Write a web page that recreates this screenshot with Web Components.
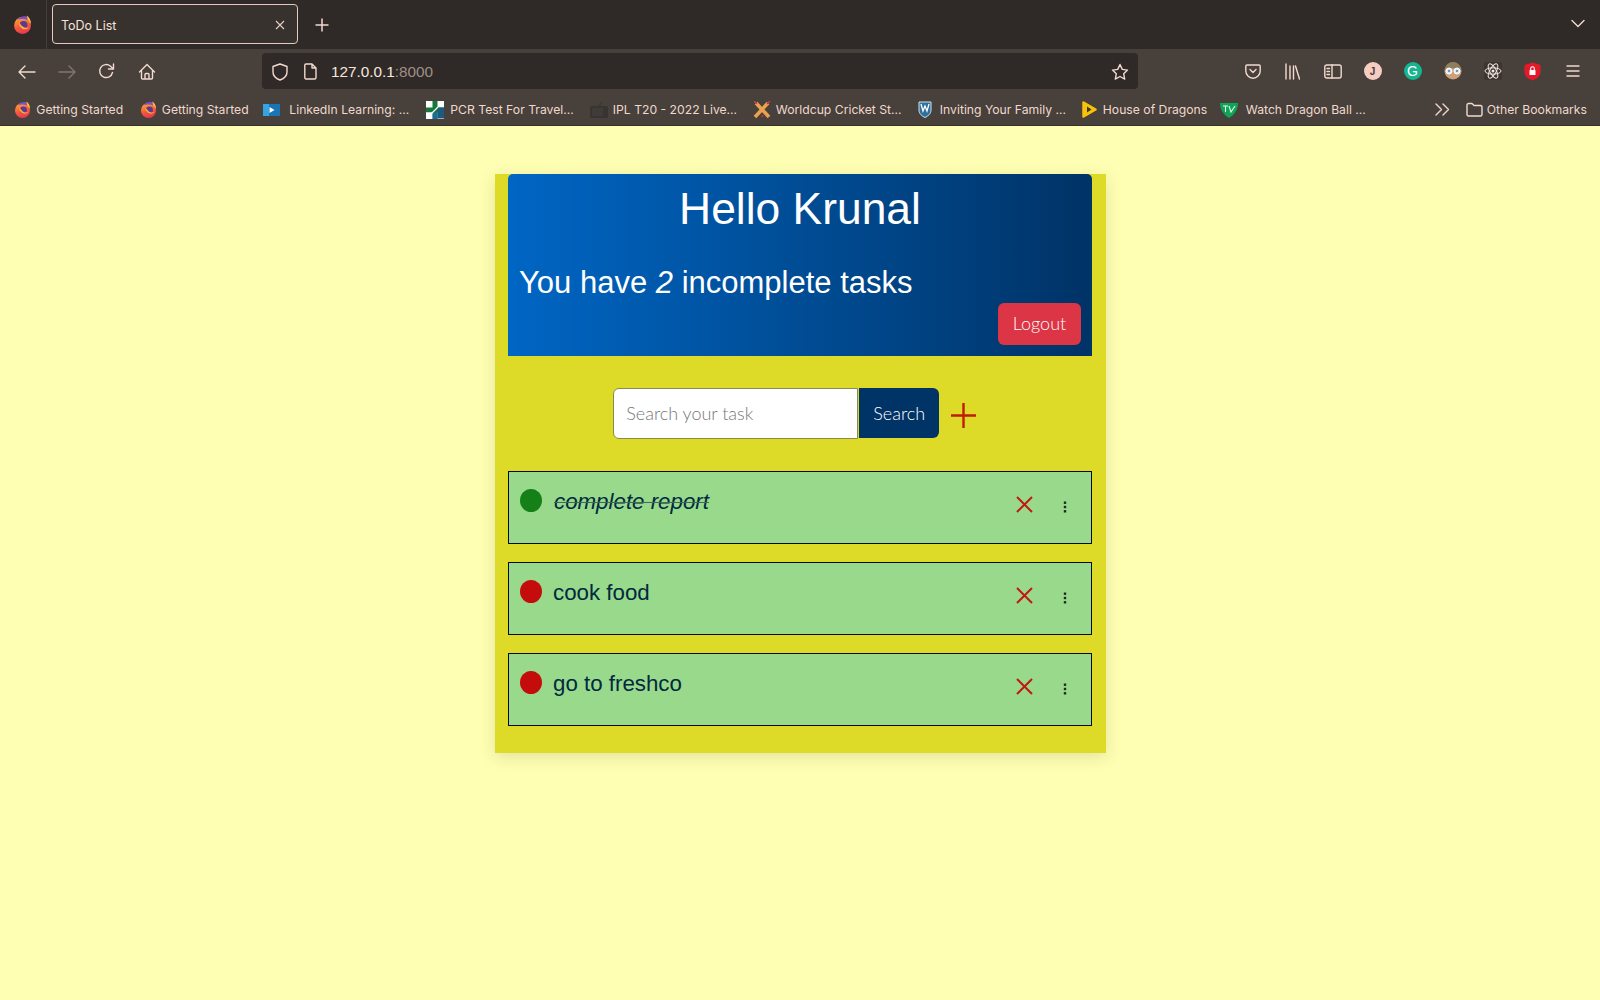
<!DOCTYPE html>
<html>
<head>
<meta charset="utf-8">
<title>ToDo List</title>
<style>
  html, body { margin: 0; height: 100%; }
  body { display: flex; flex-direction: column; height: 1000px; overflow: hidden; background: #ffffb3; font-family: "Liberation Sans", sans-serif; }
</style>
</head>
<body>
<browser-chrome></browser-chrome>
<todo-page>
  <todo-card>
    <todo-header name="Krunal" count="2"></todo-header>
    <todo-search></todo-search>
    <todo-item text="complete report" done></todo-item>
    <todo-item text="cook food"></todo-item>
    <todo-item text="go to freshco"></todo-item>
  </todo-card>
</todo-page>
<script>
const STROKE = 'fill="none" stroke="#f3d9cf" stroke-width="1.4" stroke-linecap="round" stroke-linejoin="round"';

// small firefox logo, used in the tab strip and the bookmarks
const foxIcon = (id, size) => `<svg width="${size}" height="${size}" viewBox="0 0 18 18">
  <defs><linearGradient id="${id}" x1="0" y1="0" x2=".3" y2="1"><stop offset="0" stop-color="#ffb02e"/><stop offset=".65" stop-color="#f7573a"/><stop offset="1" stop-color="#ea3a55"/></linearGradient></defs>
  <circle cx="9" cy="10" r="8" fill="url(#${id})"/>
  <path d="M4 4.500C6 1.500 10 .5 13 1.500c2.500 1 4 4 4 7-1-2.500-3-4-5.500-4.500C9 3.500 6 3.500 4 4.500z" fill="#7b4fd0"/>
  <path d="M13 .5c2.500 1.500 4 4.500 4 8l-3-4z" fill="#ffc02e"/>
  <circle cx="10" cy="9.500" r="3.700" fill="#5b3a90"/>
  <path d="M5.500 7c0 4 2.500 6.500 6 6.500 1.500 0 3-.8 3.800-2-2 1-4.500.8-6-.5S6.500 8 5.500 7z" fill="#ffb02e"/>
</svg>`;

const BOOKMARK_ICONS = {
  fox1: foxIcon("fg1", 17),
  fox2: foxIcon("fg2", 17),
  linkedin: `<svg width="17" height="12" viewBox="0 0 17 12"><rect width="17" height="12" fill="#1a75b5"/><rect width="6" height="12" fill="#35a4e2"/><path d="M6.500 3l5 3-5 3z" fill="#fff"/></svg>`,
  pcr: `<svg width="18" height="18" viewBox="0 0 18 18"><rect width="18" height="18" fill="#fff"/><path d="M6.500 0h5v6.500H18v5h-6.500V18h-5v-6.500H0v-5h6.500z" fill="#14773c"/><path d="M0 11.500h6.500V18H0z" fill="#fff"/><path d="M11.500 6.500H18v11h-6.500z" fill="#1d5a80"/><path d="M6.500 11.500h5V18h-5z" fill="#1b6d96"/><path d="M5 13l7-7" stroke="#fff" stroke-width="1.200"/></svg>`,
  tv: `<svg width="18" height="18" viewBox="0 0 18 18"><path d="M9 5l3-4" stroke="#3a3733" stroke-width="1.200"/><rect y="5" width="18" height="12" rx="1.500" fill="#373431"/><rect x="2" y="7" width="11" height="8" fill="#3f3c38"/></svg>`,
  bats: `<svg width="18" height="18" viewBox="0 0 18 18"><path d="M3 2l13 14M15 2L2 16" stroke="#eba24e" stroke-width="3.600"/><path d="M1 0l3 3M17 0l-3 3" stroke="#c9394a" stroke-width="1.600"/><circle cx="9.500" cy="15" r="1" fill="#d5384a"/></svg>`,
  crest: `<svg width="14" height="17" viewBox="0 0 14 17"><path d="M1 1h12v8c0 4-3 6-6 7.500C4 15 1 13 1 9z" fill="#2f6f9c" stroke="#cfe5f2" stroke-width="1"/><path d="M3 3l2 7 2-5 2 5 2-7" fill="none" stroke="#fff" stroke-width="1.300"/></svg>`,
  play: `<svg width="15" height="17" viewBox="0 0 15 17"><path d="M1.500 1.500L13.500 8.500 1.500 15.500z" fill="#f7c20a" stroke="#f7c20a" stroke-width="2.500" stroke-linejoin="round"/><path d="M5 5.500l4.500 3L5 11.500z" fill="#3b3733"/></svg>`,
  tvg: `<svg width="18" height="16" viewBox="0 0 18 16"><path d="M0 1h18c0 7-4 12-9 15C4 13 0 8 0 1z" fill="#0fa458"/><path d="M3 4h5M5.500 4v6M9 4l2 6 4-6" fill="none" stroke="#e7f7ee" stroke-width="1.100"/></svg>`
};

class BookmarkLink extends HTMLElement {
  connectedCallback() {
    const icon = BOOKMARK_ICONS[this.getAttribute("icon")] || "";
    this.attachShadow({ mode: "open" }).innerHTML = `
      <style>
        :host { display: flex; align-items: center; gap: var(--bm-gap, 5px); white-space: nowrap; flex: none; }
        span { font: 12.200px Inter, "Liberation Sans", sans-serif; color: #f0d8ce; }
        .i { display: flex; }
      </style>
      <div class="i">${icon}</div><span><slot></slot></span>`;
  }
}
customElements.define("bookmark-link", BookmarkLink);

class BrowserChrome extends HTMLElement {
  constructor() {
    super();
    this.attachShadow({ mode: "open" }).innerHTML = `
      <style>
        :host { display: block; flex: none; font-family: "Liberation Sans", sans-serif; color: #f3d9cf; }
        svg { display: block; }
        .tabs { height: 49px; background: #2f2a27; display: flex; align-items: flex-start; }
        .fox { width: 47px; height: 49px; padding-right: 2px; border-right: 1px solid #46403c; box-sizing: border-box; display: flex; align-items: center; justify-content: center; }
        .tab { margin: 4px 0 0 5px; width: 246px; height: 40px; box-sizing: border-box; border: 1px solid #e8c9bb; border-radius: 4px; background: #38322f; display: flex; align-items: center; justify-content: space-between; padding: 2px 12px 0 8px; font: 12.500px Inter, "Liberation Sans", sans-serif; color: #f5e3da; }
        .new { margin: 18px 0 0 17px; }
        .all { margin: 19px 15px 0 auto; }
        .toolbar { height: 49px; padding-top: 4px; box-sizing: border-box; background: #47403b; display: flex; align-items: flex-start; }
        .nav { display: flex; align-items: center; height: 36px; width: 262px; padding: 1px 0 0 6.500px; box-sizing: border-box; }
        .cell { width: 40px; display: flex; justify-content: center; align-items: center; flex: none; }
        .url { width: 876px; height: 36px; background: #2f2a27; border-radius: 4px; display: flex; align-items: center; padding: 1px 9px 0 10px; box-sizing: border-box; font-size: 15.300px; }
        .url b { font-weight: 400; color: #f7e6de; margin-left: 14px; }
        .url b i { font-style: normal; color: #a08f87; }
        .url .doc { margin-left: 16px; }
        .url .star { margin-left: auto; }
        .right { flex: 1; display: flex; align-items: center; height: 36px; justify-content: flex-end; padding: 0 7.500px 0 0; }
        .avatar { width: 18px; height: 18px; border-radius: 50%; display: flex; align-items: center; justify-content: center; font-size: 10px; font-weight: 700; }
        .bookmarks { height: 28px; box-sizing: border-box; border-bottom: 1px solid #34302c; background: #47403b; display: flex; align-items: flex-start; padding-left: 14.300px; }
        .bookmarks bookmark-link { height: 23px; }
        .list { display: flex; }
        .end { margin-left: auto; display: flex; align-items: center; height: 23px; padding-right: 13px; gap: 16px; font: 12.200px Inter, "Liberation Sans", sans-serif; color: #f0d8ce; }
        .end div { display: flex; align-items: center; gap: 4px; }
      </style>
      <div class="tabs">
        <div class="fox">${foxIcon("fg0", 19)}</div>
        <div class="tab"><span>ToDo List</span>
          <svg width="10" height="10" viewBox="0 0 10 10"><path d="M1 1l8 8M9 1L1 9" stroke="#e6cfc5" stroke-width="1.100"/></svg>
        </div>
        <svg class="new" width="14" height="14" viewBox="0 0 14 14"><path d="M7 .5v13M.5 7h13" stroke="#f3d9cf" stroke-width="1.500"/></svg>
        <svg class="all" width="14" height="9" viewBox="0 0 14 9"><path d="M1 1.500l6 6 6-6" ${STROKE}/></svg>
      </div>
      <div class="toolbar">
        <div class="nav">
          <div class="cell"><svg width="18" height="14" viewBox="0 0 18 14"><path d="M1 7h16M7 1L1 7l6 6" ${STROKE}/></svg></div>
          <div class="cell"><svg width="18" height="14" viewBox="0 0 18 14"><path d="M1 7h16M11 1l6 6-6 6" fill="none" stroke="#84756e" stroke-width="1.400" stroke-linecap="round" stroke-linejoin="round"/></svg></div>
          <div class="cell"><svg width="17" height="17" viewBox="0 0 17 17"><path d="M14.500 9.500A6.500 6.500 0 1 1 12.500 3.200L15 5.500" ${STROKE}/><path d="M15.500 1v5h-5" ${STROKE}/></svg></div>
          <div class="cell"><svg width="18" height="18" viewBox="0 0 18 18"><path d="M1.500 9L9 1.500 16.500 9M3.500 7.500V15a1 1 0 0 0 1 1h9a1 1 0 0 0 1-1V7.500M7 16v-4.500a1 1 0 0 1 1-1h2a1 1 0 0 1 1 1V16" ${STROKE}/></svg></div>
        </div>
        <div class="url">
          <svg width="16" height="18" viewBox="0 0 16 18"><path d="M8 1l7 2.500V9c0 4-3.500 6.800-7 8-3.500-1.200-7-4-7-8V3.500z" ${STROKE}/></svg>
          <svg class="doc" width="13" height="17" viewBox="0 0 13 17"><path d="M2 1h6l4 4v9.500a1.500 1.500 0 0 1-1.500 1.500h-8.500A1.500 1.500 0 0 1 .8 14.500V2.200A1.200 1.200 0 0 1 2 1zM8 1v4h4" ${STROKE}/></svg>
          <b>127.0.0.1<i>:8000</i></b>
          <svg class="star" width="18" height="18" viewBox="0 0 18 18"><path d="M9 1.500l2.300 4.900 5.200.7-3.800 3.700 1 5.300L9 13.500l-4.700 2.600 1-5.300L1.500 7.100l5.200-.7z" ${STROKE}/></svg>
        </div>
        <div class="right">
          <div class="cell"><svg width="16" height="15" viewBox="0 0 16 15"><path d="M2 1h12a1.200 1.200 0 0 1 1.200 1.200V7a7.200 7.200 0 0 1-14.400 0V2.200A1.200 1.200 0 0 1 2 1z" ${STROKE}/><path d="M5 5.500l3 3 3-3" ${STROKE}/></svg></div>
          <div class="cell"><svg width="15" height="17" viewBox="0 0 15 17"><path d="M1 1v15M5 3v13M8.500 3v13M10.500 3l4 13" ${STROKE}/></svg></div>
          <div class="cell"><svg width="18" height="15" viewBox="0 0 18 15"><rect x=".8" y="1" width="16.400" height="13" rx="2" ${STROKE}/><path d="M8 1v13M3 4.500h2.500M3 7.500h2.500M3 10.500h2.500" ${STROKE}/></svg></div>
          <div class="cell"><div class="avatar" style="background:#f6cdc2;color:#4b3a35">J</div></div>
          <div class="cell"><div class="avatar" style="background:#15b58f;color:#fff;font-size:14px;font-weight:400">G</div></div>
          <div class="cell"><svg width="18" height="18" viewBox="0 0 18 18"><circle cx="9" cy="9" r="8.500" fill="#cf9f7c"/><path d="M1 8a8 8 0 0 1 16 0c-3-2-13-2-16 0z" fill="#8f7d60"/><circle cx="5" cy="9" r="3" fill="#dbe7ee" stroke="#fff"/><circle cx="13" cy="9" r="3" fill="#dbe7ee" stroke="#fff"/><circle cx="5" cy="9" r="1" fill="#4d7f9c"/><circle cx="13" cy="9" r="1" fill="#4d7f9c"/></svg></div>
          <div class="cell"><svg width="18" height="18" viewBox="0 0 18 18"><rect width="18" height="18" rx="2" fill="#3b3531"/><g fill="none" stroke="#f1e6e0" stroke-width="1"><ellipse cx="9" cy="9" rx="8" ry="3.200"/><ellipse cx="9" cy="9" rx="8" ry="3.200" transform="rotate(60 9 9)"/><ellipse cx="9" cy="9" rx="8" ry="3.200" transform="rotate(120 9 9)"/></g><circle cx="9" cy="9" r="1.500" fill="#f1e6e0"/></svg></div>
          <div class="cell"><svg width="17" height="19" viewBox="0 0 17 19"><path d="M8.500 .5L16.500 3v7c0 4-3.500 7-8 8.500C4 17 .5 14 .5 10V3z" fill="#e41a2b"/><rect x="5.500" y="8" width="6" height="5" rx=".5" fill="#fff"/><path d="M6.700 8V6.500a1.800 1.800 0 0 1 3.600 0V8" fill="none" stroke="#fff" stroke-width="1.100"/></svg></div>
          <div class="cell"><svg width="14" height="12" viewBox="0 0 14 12"><path d="M.5 1h13M.5 6h13M.5 11h13" stroke="#f3d9cf" stroke-width="1.500"/></svg></div>
        </div>
      </div>
      <div class="bookmarks">
        <div class="list">
          <bookmark-link icon="fox1" style="width:125.500px">Getting Started</bookmark-link>
          <bookmark-link icon="fox2" style="width:123.500px">Getting Started</bookmark-link>
          <bookmark-link icon="linkedin" style="width:163px;--bm-gap:9px">LinkedIn Learning: ...</bookmark-link>
          <bookmark-link icon="pcr" style="width:163.500px;--bm-gap:6px">PCR Test For Travel...</bookmark-link>
          <bookmark-link icon="tv" style="width:163px;--bm-gap:5px">IPL T20 - 2022 Live...</bookmark-link>
          <bookmark-link icon="bats" style="width:165px">Worldcup Cricket St...</bookmark-link>
          <bookmark-link icon="crest" style="width:164px;--bm-gap:8px">Inviting Your Family ...</bookmark-link>
          <bookmark-link icon="play" style="width:138px;--bm-gap:6px">House of Dragons</bookmark-link>
          <bookmark-link icon="tvg" style="--bm-gap:8px">Watch Dragon Ball ...</bookmark-link>
        </div>
        <div class="end">
          <svg width="15" height="13" viewBox="0 0 15 13"><path d="M1 1l5.500 5.500L1 12M8 1l5.500 5.500L8 12" ${STROKE}/></svg>
          <div><svg width="17" height="15" viewBox="0 0 17 15"><path d="M1 3a1.500 1.500 0 0 1 1.500-1.500h3.500L8 3.500h6.500A1.500 1.500 0 0 1 16 5v7.500a1.500 1.500 0 0 1-1.500 1.500h-12A1.500 1.500 0 0 1 1 12.500z" ${STROKE}/></svg>Other Bookmarks</div>
        </div>
      </div>`;
  }
}
customElements.define("browser-chrome", BrowserChrome);

class TodoPage extends HTMLElement {
  constructor() {
    super();
    this.attachShadow({ mode: "open" }).innerHTML = `
      <style>
        :host { display: flex; justify-content: center; align-items: flex-start; flex: 1; padding-top: 48px; background: #ffffb3; }
      </style>
      <slot></slot>`;
  }
}
customElements.define("todo-page", TodoPage);

class TodoCard extends HTMLElement {
  constructor() {
    super();
    this.attachShadow({ mode: "open" }).innerHTML = `
      <style>
        :host { display: flex; flex-direction: column; width: 611px; box-sizing: border-box; padding: 0 13.500px 27px; background: #dddb28; box-shadow: 0 4px 16px rgba(0, 0, 0, .12); }
      </style>
      <slot></slot>`;
  }
}
customElements.define("todo-card", TodoCard);

class TodoHeader extends HTMLElement {
  constructor() {
    super();
    const name = this.getAttribute("name");
    const count = this.getAttribute("count");
    this.attachShadow({ mode: "open" }).innerHTML = `
      <style>
        :host { display: flex; flex-direction: column; height: 182px; box-sizing: border-box; padding: 9px 11px 11px; border-radius: 5px 5px 0 0; color: #fff; background: linear-gradient(90deg, #0066c4, #003366); }
        h1 { margin: 0; font-size: 44.400px; font-weight: 400; line-height: 52px; text-align: center; }
        p { margin: 28px 0 0; font-size: 31px; line-height: 40px; }
        button { margin: auto 0 0 auto; width: 83px; height: 42px; padding: 0 0 2px; border: 0; border-radius: 6px; background: #dc3545; color: #fff; font: 300 18px Lato, "Open Sans", sans-serif; }
      </style>
      <h1>Hello ${name}</h1>
      <p>You have <em>${count}</em> incomplete tasks</p>
      <button>Logout</button>`;
  }
}
customElements.define("todo-header", TodoHeader);

class TodoSearch extends HTMLElement {
  constructor() {
    super();
    this.attachShadow({ mode: "open" }).innerHTML = `
      <style>
        :host { display: flex; justify-content: center; align-items: center; height: 115px; box-sizing: border-box; padding: 0 11px 1px 0; font: 300 18px Lato, "Open Sans", sans-serif; }
        input { width: 245px; height: 51px; box-sizing: border-box; padding: 0 12px 1px; border: 1px solid #8a8a50; border-radius: 6px 0 0 6px; background: #fff; font: inherit; outline: 0; }
        input::placeholder { color: #777; opacity: 1; }
        button { width: 80px; height: 50px; margin-left: 1px; padding: 0 0 1px; border: 0; border-radius: 0 6px 6px 0; background: #003366; color: #fff; font: inherit; }
        svg { margin: 4px 0 0 11.500px; display: block; }
      </style>
      <input placeholder="Search your task">
      <button>Search</button>
      <svg width="25" height="25" viewBox="0 0 25 25"><path d="M12.500 0v25M0 12.500h25" stroke="#c01a0a" stroke-width="2.400"/></svg>`;
  }
}
customElements.define("todo-search", TodoSearch);

class TodoItem extends HTMLElement {
  constructor() {
    super();
    const done = this.hasAttribute("done");
    this.attachShadow({ mode: "open" }).innerHTML = `
      <style>
        :host { display: flex; align-items: flex-start; height: 73px; box-sizing: border-box; margin-bottom: 18px; padding: 17px 0 0 11px; border: 1px solid #0b0b0b; background: #99d98c; }
        :host(:last-child) { margin-bottom: 0; }
        .dot { width: 22px; height: 23px; border-radius: 50%; background: ${done ? "#168018" : "#c40c0c"}; }
        .text { margin: ${done ? "-1px 0 0 12px" : "-1px 0 0 11px"}; font-size: 22.300px; line-height: 28px; color: #012a3f; ${done ? "font-style: italic; text-decoration: line-through 1px #3f6b55;" : ""} }
        .del { margin: 7px 0 0 auto; display: block; }
        .more { margin: 12px 24px 0 30px; display: block; }
      </style>
      <div class="dot"></div>
      <div class="text">${this.getAttribute("text")}</div>
      <svg class="del" width="17" height="17" viewBox="0 0 17 17"><path d="M1 1l15 15M16 1L1 16" stroke="#c2190f" stroke-width="2"/></svg>
      <svg class="more" width="4" height="12" viewBox="0 0 4 12"><rect x=".8" y=".5" width="2.400" height="2.400" fill="#1c2b1c"/><rect x=".8" y="4.800" width="2.400" height="2.400" fill="#1c2b1c"/><rect x=".8" y="9.100" width="2.400" height="2.400" fill="#1c2b1c"/></svg>`;
  }
}
customElements.define("todo-item", TodoItem);
</script>
</body>
</html>
